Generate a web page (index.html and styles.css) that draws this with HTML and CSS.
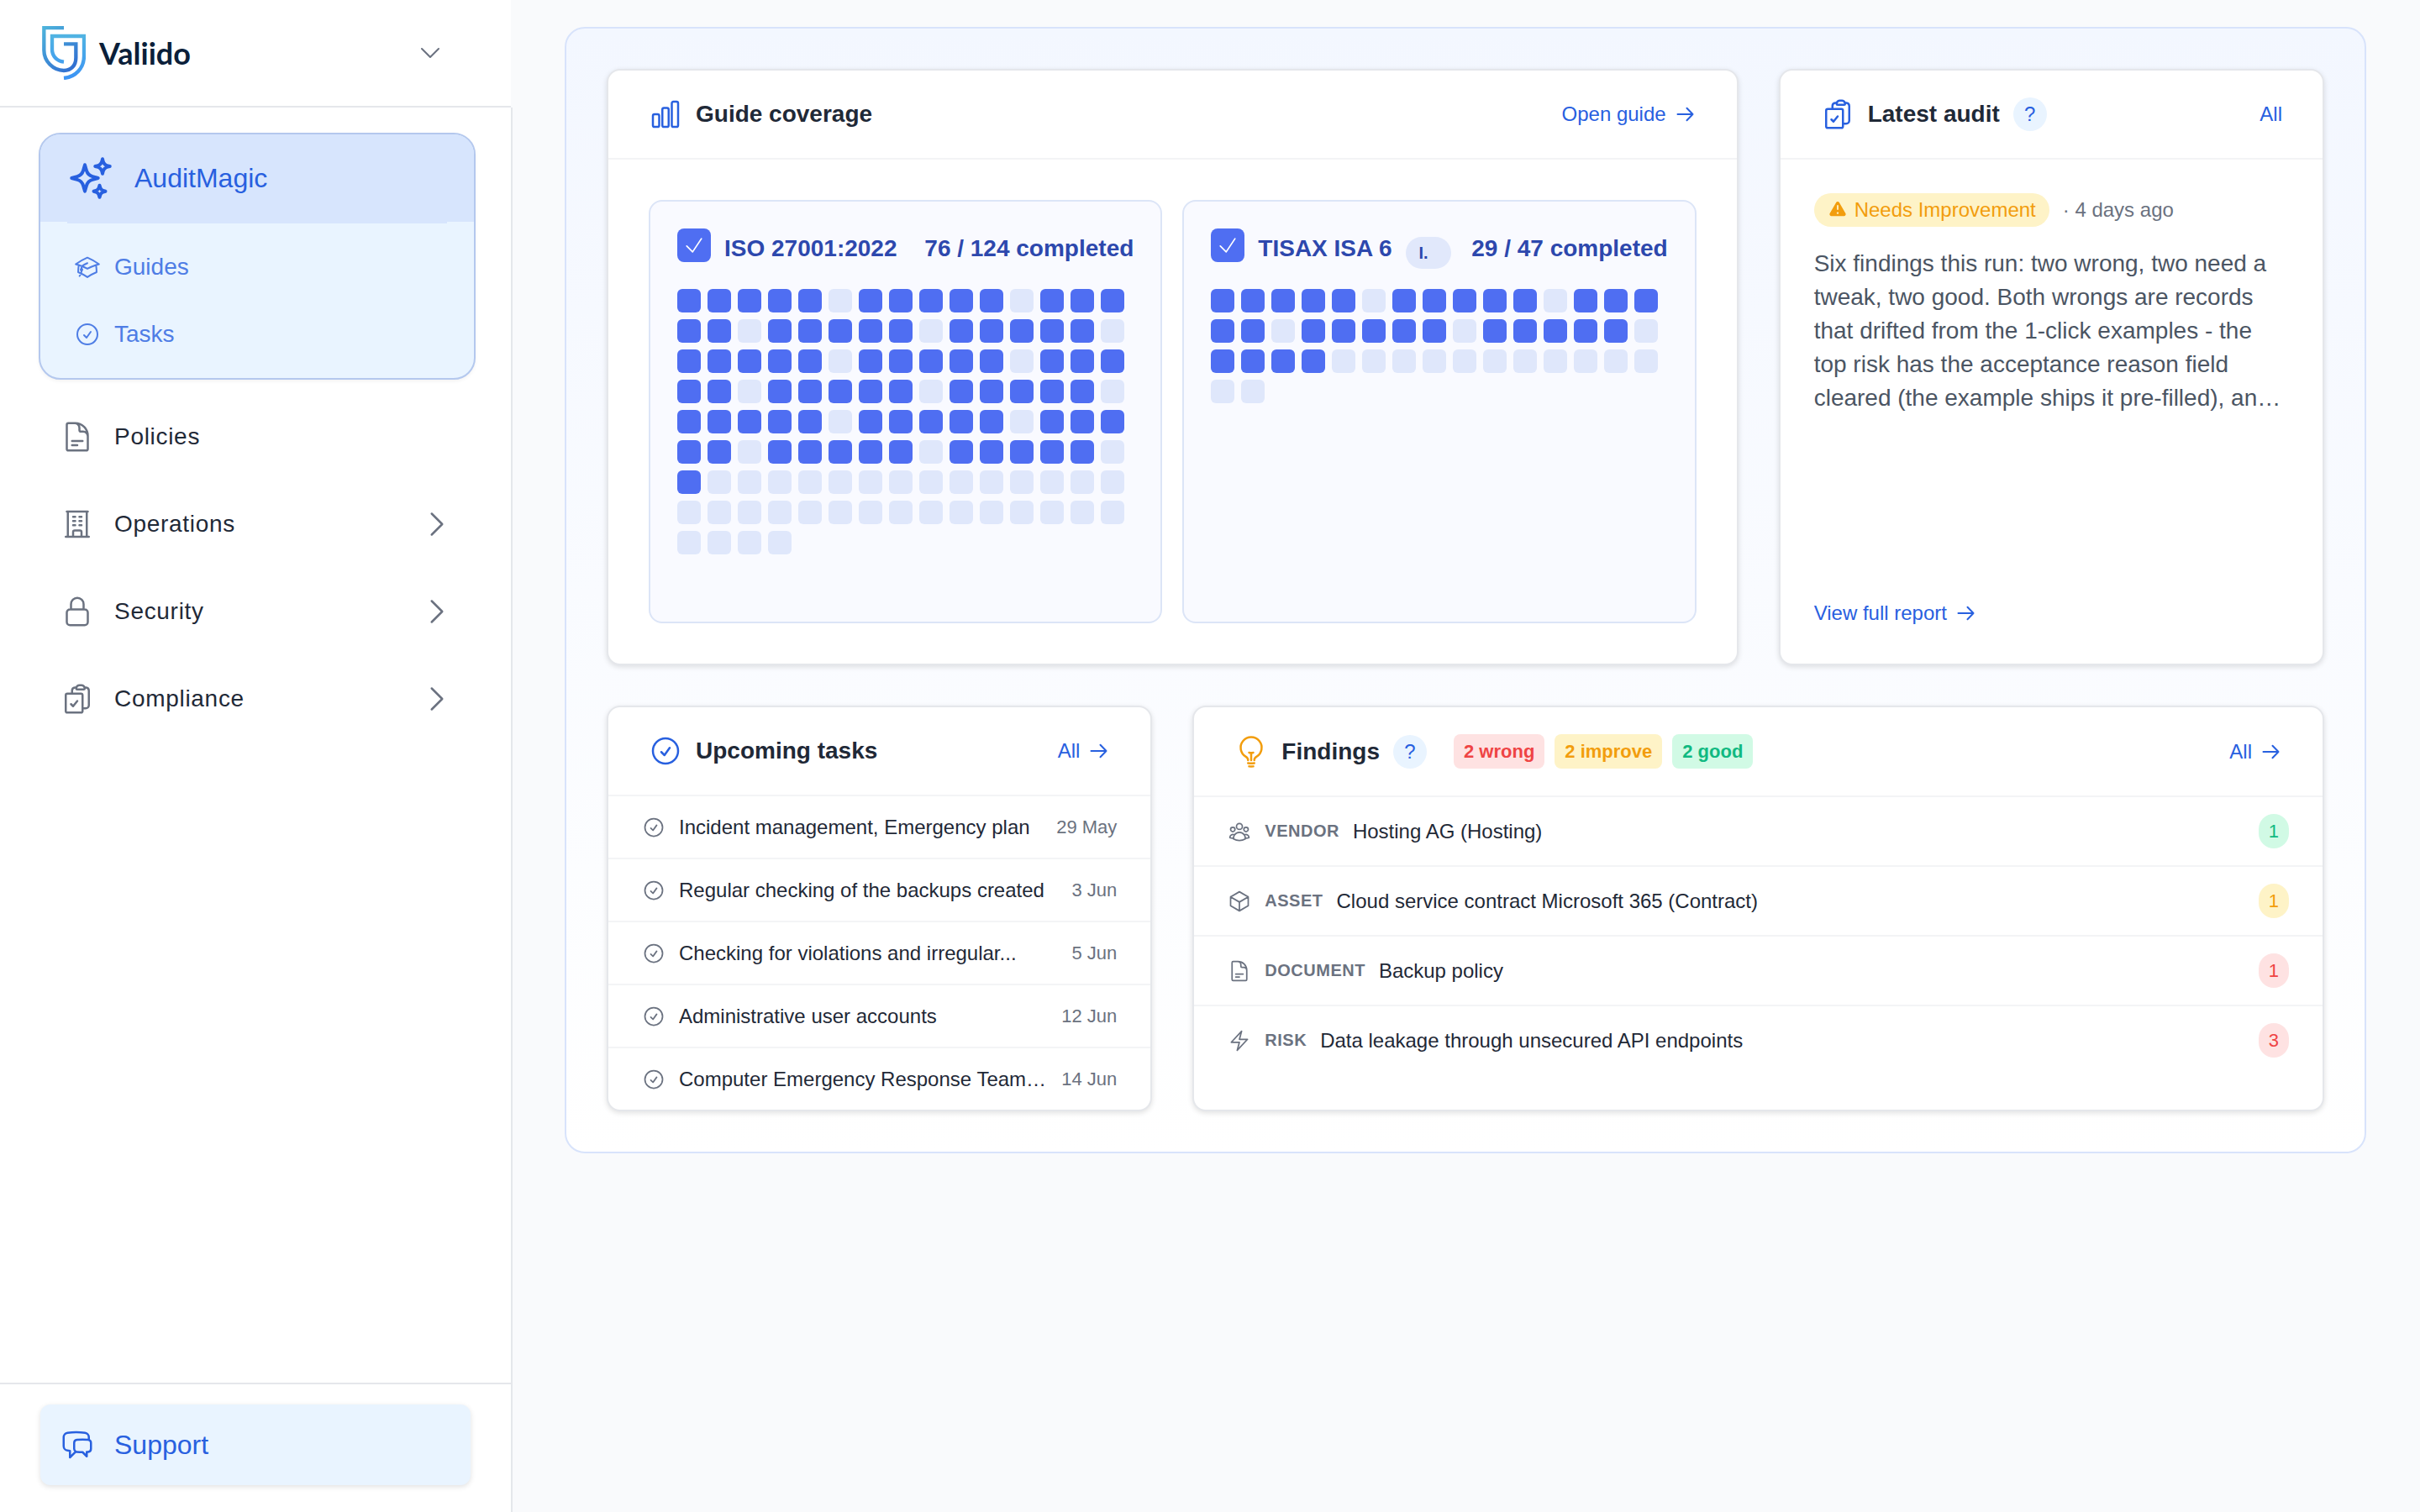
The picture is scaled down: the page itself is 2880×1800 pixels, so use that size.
FILE: index.html
```html
<!DOCTYPE html>
<html lang="en">
<head>
    <meta charset="UTF-8">
    <meta name="viewport" content="width=device-width, initial-scale=1.0">
    <title>Valiido - AuditMagic</title>
    <link rel="stylesheet" href="styles.css">
</head>
<body>
    <!-- Icon set -->
    <svg class="icon-defs" aria-hidden="true">
        <symbol id="i-sparkles" viewBox="0 0 24 24"><path d="M9.813 15.904 9 18.75l-.813-2.846a4.5 4.5 0 0 0-3.09-3.09L2.25 12l2.846-.813a4.5 4.5 0 0 0 3.09-3.09L9 5.25l.813 2.846a4.5 4.5 0 0 0 3.09 3.09L15.75 12l-2.846.813a4.5 4.5 0 0 0-3.09 3.09ZM18.259 8.715 18 9.75l-.259-1.035a3.375 3.375 0 0 0-2.455-2.456L14.25 6l1.036-.259a3.375 3.375 0 0 0 2.455-2.456L18 2.25l.259 1.035a3.375 3.375 0 0 0 2.456 2.456L21.75 6l-1.035.259a3.375 3.375 0 0 0-2.456 2.456ZM16.894 20.567 16.5 21.75l-.394-1.183a2.25 2.25 0 0 0-1.423-1.423L13.5 18.75l1.183-.394a2.25 2.25 0 0 0 1.423-1.423l.394-1.183.394 1.183a2.25 2.25 0 0 0 1.423 1.423l1.183.394-1.183.394a2.25 2.25 0 0 0-1.423 1.423Z"/></symbol>
        <symbol id="i-guides" viewBox="0 0 24 24"><path d="M4.26 10.147a60.438 60.438 0 0 0-.491 6.347A48.62 48.62 0 0 1 12 20.904a48.62 48.62 0 0 1 8.232-4.41 60.46 60.46 0 0 0-.491-6.347m-15.482 0a50.636 50.636 0 0 0-2.658-.813A59.906 59.906 0 0 1 12 3.493a59.903 59.903 0 0 1 10.399 5.84c-.896.248-1.783.52-2.658.814m-15.482 0A50.717 50.717 0 0 1 12 13.489a50.702 50.702 0 0 1 7.74-3.342M6.75 15a.75.75 0 1 0 0-1.5.75.75 0 0 0 0 1.5Zm0 0v-3.675A55.378 55.378 0 0 1 12 8.443m-7.007 11.55A5.981 5.981 0 0 0 6.75 15.75v-1.5"/></symbol>
        <symbol id="i-check-circle" viewBox="0 0 24 24"><path d="M9 12.75 11.25 15 15 9.75M21 12a9 9 0 1 1-18 0 9 9 0 0 1 18 0Z"/></symbol>
        <symbol id="i-document" viewBox="0 0 24 24"><path d="M19.5 14.25v-2.625a3.375 3.375 0 0 0-3.375-3.375h-1.5A1.125 1.125 0 0 1 13.5 7.125v-1.5a3.375 3.375 0 0 0-3.375-3.375H8.25m0 12.75h7.5m-7.5 3H12M10.5 2.25H5.625c-.621 0-1.125.504-1.125 1.125v17.25c0 .621.504 1.125 1.125 1.125h12.75c.621 0 1.125-.504 1.125-1.125V11.25a9 9 0 0 0-9-9Z"/></symbol>
        <symbol id="i-building" viewBox="0 0 24 24"><path d="M3.75 21h16.5M4.5 3h15M5.25 3v18m13.5-18v18M9 6.75h1.5m-1.5 3h1.5m-1.5 3h1.5m3-6H15m-1.5 3H15m-1.5 3H15M9 21v-3.375c0-.621.504-1.125 1.125-1.125h3.75c.621 0 1.125.504 1.125 1.125V21"/></symbol>
        <symbol id="i-lock" viewBox="0 0 24 24"><path d="M16.5 10.5V6.75a4.5 4.5 0 1 0-9 0v3.75m-.75 11.25h10.5a2.25 2.25 0 0 0 2.25-2.25v-6.75a2.25 2.25 0 0 0-2.25-2.25H6.75a2.25 2.25 0 0 0-2.25 2.25v6.75a2.25 2.25 0 0 0 2.25 2.25Z"/></symbol>
        <symbol id="i-clipboard" viewBox="0 0 24 24"><path d="M11.35 3.836c-.065.21-.1.433-.1.664 0 .414.336.75.75.75h4.5a.75.75 0 0 0 .75-.75 2.25 2.25 0 0 0-.1-.664m-5.8 0A2.251 2.251 0 0 1 13.5 2.25H15c1.012 0 1.867.668 2.15 1.586m-5.8 0c-.376.023-.75.05-1.124.08C9.095 4.01 8.25 4.973 8.25 6.108V8.25m8.9-4.414c.376.023.75.05 1.124.08 1.131.094 1.976 1.057 1.976 2.192V16.5A2.25 2.25 0 0 1 18 18.75h-2.25m-7.5-10.5H4.875c-.621 0-1.125.504-1.125 1.125v11.25c0 .621.504 1.125 1.125 1.125h9.75c.621 0 1.125-.504 1.125-1.125V18.75m-7.5-10.5h6.375c.621 0 1.125.504 1.125 1.125v9.375m-8.25-3 1.5 1.5 3-3.75"/></symbol>
        <symbol id="i-chat" viewBox="0 0 24 24"><path d="M20.25 8.511c.884.284 1.5 1.128 1.5 2.097v4.286c0 1.136-.847 2.1-1.98 2.193-.34.027-.68.052-1.02.072v3.091l-3-3c-1.354 0-2.694-.055-4.02-.163a2.115 2.115 0 0 1-.825-.242m9.345-8.334a2.126 2.126 0 0 0-.476-.095 48.64 48.64 0 0 0-8.048 0c-1.131.094-1.976 1.057-1.976 2.192v4.286c0 .837.46 1.58 1.155 1.951m9.345-8.334V6.637c0-1.621-1.152-3.026-2.76-3.235A48.455 48.455 0 0 0 11.25 3c-2.115 0-4.198.137-6.24.402-1.608.209-2.76 1.614-2.76 3.235v6.226c0 1.621 1.152 3.026 2.76 3.235.577.075 1.157.14 1.74.194V21l4.155-4.155"/></symbol>
        <symbol id="i-chart" viewBox="0 0 24 24"><path d="M3 13.125C3 12.504 3.504 12 4.125 12h2.25c.621 0 1.125.504 1.125 1.125v6.75C7.5 20.496 6.996 21 6.375 21h-2.25A1.125 1.125 0 0 1 3 19.875v-6.75ZM9.75 8.625c0-.621.504-1.125 1.125-1.125h2.25c.621 0 1.125.504 1.125 1.125v11.25c0 .621-.504 1.125-1.125 1.125h-2.25a1.125 1.125 0 0 1-1.125-1.125V8.625ZM16.5 4.125c0-.621.504-1.125 1.125-1.125h2.25C20.496 3 21 3.504 21 4.125v15.75c0 .621-.504 1.125-1.125 1.125h-2.25a1.125 1.125 0 0 1-1.125-1.125V4.125Z"/></symbol>
        <symbol id="i-bulb" viewBox="0 0 24 24"><path d="M12 18v-5.25m0 0a6.01 6.01 0 0 0 1.5-.189m-1.5.189a6.01 6.01 0 0 1-1.5-.189m3.75 7.478a12.06 12.06 0 0 1-4.5 0m3.75 2.383a14.406 14.406 0 0 1-3 0M14.25 18v-.192c0-.983.658-1.823 1.508-2.316a7.5 7.5 0 1 0-7.517 0c.85.493 1.509 1.333 1.509 2.316V18"/></symbol>
        <symbol id="i-users" viewBox="0 0 24 24"><path d="M18 18.72a9.094 9.094 0 0 0 3.741-.479 3 3 0 0 0-4.682-2.72m.94 3.198.001.031c0 .225-.012.447-.037.666A11.944 11.944 0 0 1 12 21c-2.17 0-4.207-.576-5.963-1.584A6.062 6.062 0 0 1 6 18.719m12 0a5.971 5.971 0 0 0-.941-3.197m0 0A5.995 5.995 0 0 0 12 12.75a5.995 5.995 0 0 0-5.058 2.772m0 0a3 3 0 0 0-4.681 2.72 8.986 8.986 0 0 0 3.74.477m.94-3.197a5.971 5.971 0 0 0-.94 3.197M15 6.75a3 3 0 1 1-6 0 3 3 0 0 1 6 0Zm6 3a2.25 2.25 0 1 1-4.5 0 2.25 2.25 0 0 1 4.5 0Zm-13.5 0a2.25 2.25 0 1 1-4.5 0 2.25 2.25 0 0 1 4.5 0Z"/></symbol>
        <symbol id="i-cube" viewBox="0 0 24 24"><path d="m21 7.5-9-5.25L3 7.5m18 0-9 5.25m9-5.25v9l-9 5.25M3 7.5l9 5.25M3 7.5v9l9 5.25m0-9v9"/></symbol>
        <symbol id="i-bolt" viewBox="0 0 24 24"><path d="m3.75 13.5 10.5-11.25L12 10.5h8.25L9.75 21.75 12 13.5H3.75Z"/></symbol>
        <symbol id="i-chevron-right" viewBox="0 0 24 24"><path d="m8.25 4.5 7.5 7.5-7.5 7.5"/></symbol>
        <symbol id="i-chevron-down" viewBox="0 0 24 24"><path d="m19.5 8.25-7.5 7.5-7.5-7.5"/></symbol>
        <symbol id="i-arrow" viewBox="0 0 24 24"><path d="M1.5 12h18M12.5 4.75 19.5 12l-7 7.25"/></symbol>
        <symbol id="i-tick" viewBox="0 0 24 24"><path d="m4.5 12.75 6 6 9-13.5"/></symbol>
        <symbol id="i-warning" viewBox="0 0 20 20"><path fill-rule="evenodd" d="M8.485 2.495c.673-1.167 2.357-1.167 3.03 0l6.28 10.875c.673 1.167-.17 2.625-1.516 2.625H3.72c-1.347 0-2.189-1.458-1.515-2.625L8.485 2.495ZM10 5a.75.75 0 0 1 .75.75v3.5a.75.75 0 0 1-1.5 0v-3.5A.75.75 0 0 1 10 5Zm0 9a1 1 0 1 0 0-2 1 1 0 0 0 0 2Z"/></symbol>
    </svg>

    <div class="layout">
        <!-- Sidebar -->
        <aside class="sidebar">
            <div class="sidebar-header">
                <a href="#" class="brand">
                    <svg class="brand-mark" viewBox="0 0 156 192" aria-hidden="true">
                        <defs>
                            <linearGradient id="mark-a" gradientUnits="userSpaceOnUse" x1="0" y1="0" x2="130" y2="150">
                                <stop offset="0" stop-color="#4fb6dc"/>
                                <stop offset="1" stop-color="#2f6bd0"/>
                            </linearGradient>
                            <linearGradient id="mark-b" gradientUnits="userSpaceOnUse" x1="0" y1="30" x2="0" y2="192">
                                <stop offset="0" stop-color="#51b4e2"/>
                                <stop offset="1" stop-color="#3b93f5"/>
                            </linearGradient>
                        </defs>
                        <path d="M78 6H7v80c0 40 33 73 71 73 26 0 43-18 43-46V64H78" fill="none" stroke="url(#mark-a)" stroke-width="13"/>
                        <path d="M78 128c-26-3-42-22-42-44V36h114v71c0 43-30 75-72 79" fill="none" stroke="url(#mark-b)" stroke-width="13"/>
                    </svg>
                    <span class="brand-name">Valiido</span>
                </a>
                <button type="button" class="icon-btn" aria-label="Switch workspace">
                    <svg class="icon icon-md"><use href="#i-chevron-down"/></svg>
                </button>
            </div>

            <nav class="sidebar-nav">
                <div class="magic">
                    <a href="#" class="magic-head">
                        <svg class="icon icon-xl"><use href="#i-sparkles"/></svg>
                        AuditMagic
                    </a>
                    <div class="magic-sub">
                        <a href="#"><svg class="icon icon-md"><use href="#i-guides"/></svg>Guides</a>
                        <a href="#"><svg class="icon icon-md"><use href="#i-check-circle"/></svg>Tasks</a>
                    </div>
                </div>
                <a href="#" class="nav-item">
                    <svg class="icon icon-lg"><use href="#i-document"/></svg>
                    <span class="nav-label">Policies</span>
                </a>
                <button type="button" class="nav-item">
                    <svg class="icon icon-lg"><use href="#i-building"/></svg>
                    <span class="nav-label">Operations</span>
                    <svg class="icon icon-lg"><use href="#i-chevron-right"/></svg>
                </button>
                <button type="button" class="nav-item">
                    <svg class="icon icon-lg"><use href="#i-lock"/></svg>
                    <span class="nav-label">Security</span>
                    <svg class="icon icon-lg"><use href="#i-chevron-right"/></svg>
                </button>
                <button type="button" class="nav-item">
                    <svg class="icon icon-lg"><use href="#i-clipboard"/></svg>
                    <span class="nav-label">Compliance</span>
                    <svg class="icon icon-lg"><use href="#i-chevron-right"/></svg>
                </button>
            </nav>

            <div class="sidebar-footer">
                <button type="button" class="support-btn">
                    <svg class="icon icon-lg"><use href="#i-chat"/></svg>
                    Support
                </button>
            </div>
        </aside>

        <!-- Dashboard -->
        <main class="main">
            <div class="panel">
                <section class="card span-2">
                    <header class="card-header">
                        <svg class="icon icon-lg"><use href="#i-chart"/></svg>
                        <h2>Guide coverage</h2>
                        <a href="#" class="link">Open guide <svg class="icon icon-sm"><use href="#i-arrow"/></svg></a>
                    </header>
                    <div class="guides">
                        <div class="guide">
                            <div class="guide-head">
                                <label class="guide-title">
                                    <span class="check">
                                        <input type="checkbox" checked>
                                        <svg class="icon icon-check"><use href="#i-tick"/></svg>
                                    </span>
                                    ISO 27001:2022
                                </label>
                                <span class="guide-count">76 / 124 completed</span>
                            </div>
                            <div class="cells" data-done="76" data-total="124"></div>
                        </div>
                        <div class="guide">
                            <div class="guide-head">
                                <label class="guide-title">
                                    <span class="check">
                                        <input type="checkbox" checked>
                                        <svg class="icon icon-check"><use href="#i-tick"/></svg>
                                    </span>
                                    TISAX ISA 6
                                </label>
                                <span class="tag">I.</span>
                                <span class="guide-count">29 / 47 completed</span>
                            </div>
                            <div class="cells" data-done="29" data-total="47"></div>
                        </div>
                    </div>
                </section>

                <section class="card">
                    <header class="card-header">
                        <svg class="icon icon-lg"><use href="#i-clipboard"/></svg>
                        <h2>Latest audit</h2>
                        <button type="button" class="help" aria-label="About the latest audit">?</button>
                        <a href="#" class="link">All</a>
                    </header>
                    <div class="audit">
                        <div class="audit-meta">
                            <span class="status"><svg class="icon-solid"><use href="#i-warning"/></svg>Needs Improvement</span>
                            <span class="audit-date">· 4 days ago</span>
                        </div>
                        <p class="audit-text">Six findings this run: two wrong, two need a tweak, two good. Both wrongs are records that drifted from the 1-click examples - the top risk has the acceptance reason field cleared (the example ships it pre-filled), an…</p>
                        <a href="#" class="link report-link">View full report <svg class="icon icon-sm"><use href="#i-arrow"/></svg></a>
                    </div>
                </section>

                <section class="card">
                    <header class="card-header">
                        <svg class="icon icon-lg"><use href="#i-check-circle"/></svg>
                        <h2>Upcoming tasks</h2>
                        <a href="#" class="link">All <svg class="icon icon-sm"><use href="#i-arrow"/></svg></a>
                    </header>
                    <ul class="rows tasks">
                        <li><svg class="icon icon-row"><use href="#i-check-circle"/></svg><span class="row-name">Incident management, Emergency plan</span><span class="date">29 May</span></li>
                        <li><svg class="icon icon-row"><use href="#i-check-circle"/></svg><span class="row-name">Regular checking of the backups created</span><span class="date">3 Jun</span></li>
                        <li><svg class="icon icon-row"><use href="#i-check-circle"/></svg><span class="row-name">Checking for violations and irregular...</span><span class="date">5 Jun</span></li>
                        <li><svg class="icon icon-row"><use href="#i-check-circle"/></svg><span class="row-name">Administrative user accounts</span><span class="date">12 Jun</span></li>
                        <li><svg class="icon icon-row"><use href="#i-check-circle"/></svg><span class="row-name">Computer Emergency Response Team…</span><span class="date">14 Jun</span></li>
                    </ul>
                </section>

                <section class="card span-2">
                    <header class="card-header">
                        <svg class="icon icon-lg icon-amber"><use href="#i-bulb"/></svg>
                        <h2>Findings</h2>
                        <button type="button" class="help" aria-label="About findings">?</button>
                        <div class="chips">
                            <span class="chip red">2 wrong</span>
                            <span class="chip amber">2 improve</span>
                            <span class="chip green">2 good</span>
                        </div>
                        <a href="#" class="link">All <svg class="icon icon-sm"><use href="#i-arrow"/></svg></a>
                    </header>
                    <ul class="rows findings">
                        <li><svg class="icon icon-row"><use href="#i-users"/></svg><span class="kind">VENDOR</span><span class="row-name">Hosting AG (Hosting)</span><span class="badge green">1</span></li>
                        <li><svg class="icon icon-row"><use href="#i-cube"/></svg><span class="kind">ASSET</span><span class="row-name">Cloud service contract Microsoft 365 (Contract)</span><span class="badge amber">1</span></li>
                        <li><svg class="icon icon-row"><use href="#i-document"/></svg><span class="kind">DOCUMENT</span><span class="row-name">Backup policy</span><span class="badge red">1</span></li>
                        <li><svg class="icon icon-row"><use href="#i-bolt"/></svg><span class="kind">RISK</span><span class="row-name">Data leakage through unsecured API endpoints</span><span class="badge red">3</span></li>
                    </ul>
                </section>
            </div>
        </main>
    </div>

    <script src="script.js"></script>
</body>
</html>
```
FILE: styles.css
```css
* { margin: 0; padding: 0; box-sizing: border-box; }
body {
    font-family: "Liberation Sans", Arial, sans-serif;
    font-size: 24px;
    background: #f9fafc;
    color: #1f2937;
}
a { color: inherit; text-decoration: none; }
button { font: inherit; color: inherit; background: none; border: none; cursor: pointer; text-align: left; }
ul { list-style: none; }

/* Icons */
.icon-defs { display: none; }
.icon { fill: none; stroke: currentColor; stroke-width: 1.5; stroke-linecap: round; stroke-linejoin: round; flex-shrink: 0; display: block; }
.icon-solid { width: 24px; height: 24px; fill: currentColor; flex-shrink: 0; }
.icon-sm { width: 24px; height: 24px; stroke-width: 2; }
.icon-row { width: 28px; height: 28px; color: #6b7280; }
.icon-md { width: 32px; height: 32px; }
.icon-lg { width: 40px; height: 40px; }
.icon-xl { width: 56px; height: 56px; stroke-width: 1.7; }

/* Layout */
.layout { display: flex; min-height: 100vh; }
.sidebar { width: 610px; flex-shrink: 0; display: flex; flex-direction: column; }
.main { flex: 1; min-width: 0; padding: 32px 64px 32px 62px; }

/* Sidebar */
.sidebar-header {
    display: flex;
    align-items: center;
    justify-content: space-between;
    height: 128px;
    margin-right: 2px;
    padding: 0 80px 0 50px;
    background: #fff;
    border-bottom: 2px solid #e5e7eb;
}
.brand { display: flex; align-items: center; gap: 16px; }
.brand-mark { width: 52px; height: 64px; }
.brand-name { font-family: Lato, "Liberation Sans", sans-serif; font-size: 36px; font-weight: 700; color: #0b1f3a; }
.icon-btn { color: #6b7280; }
.sidebar-nav { flex: 1; padding: 30px 42px 30px 46px; background: #fff; border-right: 2px solid #e5e7eb; }
.magic {
    margin-bottom: 16px;
    background: #e9f4ff;
    border: 2px solid #b4c8ee;
    border-radius: 26px;
    overflow: hidden;
    box-shadow: 0 2px 4px rgba(0, 0, 0, 0.05);
    color: #2860df;
}
.magic-head { display: flex; align-items: center; gap: 24px; height: 104px; padding: 0 32px; background: #d7e5fd; font-size: 32px; }
.magic-sub { margin: 0 32px; padding: 12px 8px; border-top: 2px solid #d7e5fd; }
.magic-sub a { display: flex; align-items: center; gap: 16px; height: 80px; font-size: 28px; opacity: 0.8; }
.nav-item { display: flex; align-items: center; gap: 24px; width: 100%; height: 104px; padding: 0 26px; font-size: 28px; letter-spacing: 0.025em; }
.nav-item .icon { color: #6b7280; }
.nav-label { flex: 1; }
.sidebar-footer { padding: 24px 48px 32px; background: #fff; border-top: 2px solid #e5e7eb; border-right: 2px solid #e5e7eb; }
.support-btn {
    display: flex;
    align-items: center;
    gap: 24px;
    width: 100%;
    height: 96px;
    padding: 0 24px;
    border-radius: 12px;
    background: #e9f4ff;
    box-shadow: 0 2px 6px rgba(0, 0, 0, 0.12);
    color: #2860df;
    font-size: 32px;
}

/* Panel and cards */
.panel {
    display: grid;
    grid-template-columns: repeat(3, minmax(0, 1fr));
    gap: 48px;
    padding: 48px;
    border: 2px solid #d8e3fb;
    border-radius: 24px;
    background: linear-gradient(to bottom, #f3f7ff, #fff);
}
.card {
    display: flex;
    flex-direction: column;
    background: #fff;
    border: 2px solid #e5e7eb;
    border-radius: 16px;
    box-shadow: 0 2px 6px rgba(0, 0, 0, 0.12);
    overflow: hidden;
}
.span-2 { grid-column: span 2; }
.card-header { display: flex; align-items: center; gap: 16px; padding: 32px 48px; border-bottom: 2px solid #f3f4f6; color: #2860df; }
.card-header h2 { font-size: 28px; line-height: 40px; font-weight: 700; color: #1f2937; }
.card-header .icon-amber { color: #f29d0d; }
.link { display: inline-flex; align-items: center; gap: 12px; color: #2860df; font-size: 24px; line-height: 40px; }
.card-header .link { margin-left: auto; }
.help { width: 40px; height: 40px; border-radius: 50%; background: #e9f4ff; color: #2860df; text-align: center; line-height: 40px; }

/* Guide coverage */
.guides { display: grid; grid-template-columns: 1fr 1fr; gap: 24px; padding: 48px; flex: 1; }
.guide { min-height: 504px; padding: 32px; border: 2px solid #dce5f7; border-radius: 16px; background: #f9faff; }
.guide-head { display: flex; align-items: center; gap: 16px; height: 48px; margin-bottom: 24px; font-size: 28px; font-weight: 700; color: #2d48ad; white-space: nowrap; }
.guide-title { display: flex; align-items: center; gap: 16px; height: 48px; }
.check { display: grid; place-items: center; align-self: flex-start; }
.check input, .check svg { grid-area: 1 / 1; }
.check input { appearance: none; width: 40px; height: 40px; border-radius: 8px; background: #4f6ef2; }
.icon-check { width: 28px; height: 28px; color: #fff; pointer-events: none; }
.tag { align-self: flex-end; width: 54px; height: 38px; padding: 0 16px; border-radius: 19px; background: #e1e8fb; font-size: 20px; line-height: 38px; }
.guide-count { margin-left: auto; }
.cells { display: flex; flex-wrap: wrap; gap: 8px; }
.cell { width: 28px; height: 28px; border-radius: 6px; background: #dfe7fb; }
.cell.done { background: #4f6ef2; }

/* Latest audit */
.audit { display: flex; flex-direction: column; align-items: flex-start; flex: 1; padding: 40px; }
.audit-meta { display: flex; align-items: center; gap: 16px; margin-bottom: 24px; color: #6b7280; }
.status { display: flex; align-items: center; gap: 8px; height: 40px; padding: 0 16px; border-radius: 20px; background: #fef3c7; color: #f29d0d; }
.audit-text { font-size: 28px; line-height: 40px; color: #4b5563; }
.report-link { margin-top: auto; }

/* Row lists */
.rows li { display: flex; align-items: center; gap: 16px; padding: 0 40px; border-bottom: 2px solid #f3f4f6; }
.rows li:last-child { border-bottom: none; }
.row-name { flex: 1; min-width: 0; white-space: nowrap; overflow: hidden; text-overflow: ellipsis; line-height: 32px; }
.tasks li { min-height: 75px; }
.tasks li:last-child { min-height: 73px; }
.findings li { min-height: 83px; }
.findings li:last-child { min-height: 81px; }
.date { font-size: 22px; color: #6b7280; }
.kind { font-size: 20px; font-weight: 700; letter-spacing: 0.025em; color: #6b7280; }
.chips { display: flex; gap: 12px; margin-left: 16px; }
.chip { padding: 0 12px; border-radius: 8px; font-size: 22px; font-weight: 700; line-height: 41px; }
.badge { padding: 0 12px; border-radius: 20px; font-size: 22px; line-height: 41px; }
.red { background: #fee2e2; color: #ef4444; }
.amber { background: #fef3c7; color: #f29d0d; }
.green { background: #d1fae5; color: #10b981; }
```
FILE: script.js
```js
// Fill the coverage grids: every sixth control is open until the done count is reached
document.querySelectorAll(".cells").forEach((grid) => {
    let left = Number(grid.dataset.done);
    for (let i = 0; i < Number(grid.dataset.total); i++) {
        const cell = document.createElement("span");
        cell.className = "cell";
        if (left > 0 && i % 6 !== 5) {
            cell.classList.add("done");
            left--;
        }
        grid.appendChild(cell);
    }
});
```
